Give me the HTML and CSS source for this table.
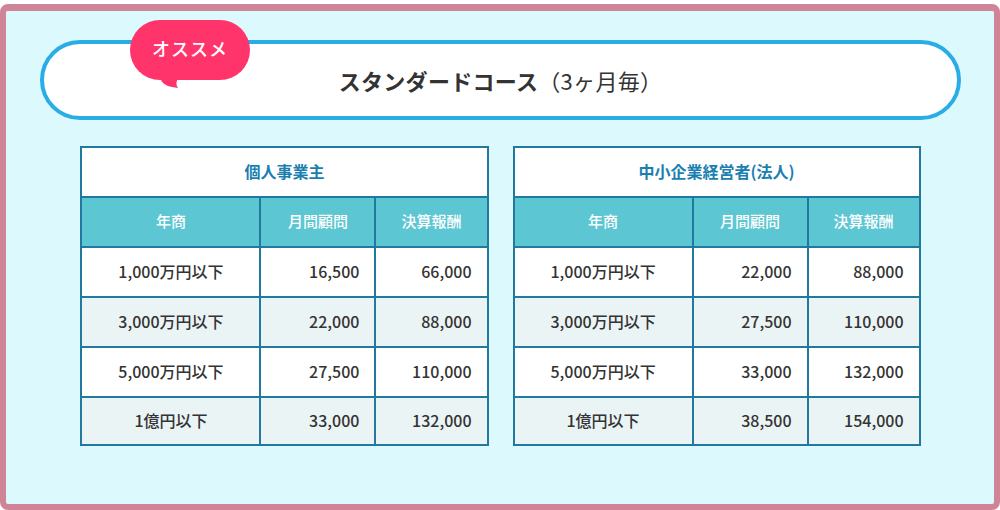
FILE: index.html
```html
<!DOCTYPE html>
<html lang="ja">
<head>
<meta charset="utf-8">
<link rel="stylesheet" href="styles.css">
</head>
<body>
<div class="frame">
  <div class="course">
    <div class="badge">
      <span>オススメ</span>
      <svg class="tail" width="20" height="12" viewBox="0 0 20 12"><path d="M0 0 Q3 8 12 9 L18 10 Q15 6 18 0 Z" fill="#ff346b"/></svg>
    </div>
    <h1 class="course-title"><b>スタンダードコース</b><span class="sub">（3ヶ月毎）</span></h1>
  </div>
  <div class="tables">
    <table class="price">
      <colgroup><col class="c1"><col class="c2"><col class="c3"></colgroup>
      <tr><th class="cap" colspan="3">個人事業主</th></tr>
      <tr class="head"><th>年商</th><th>月間顧問</th><th>決算報酬</th></tr>
      <tr><td class="lbl">1,000万円以下</td><td class="num">16,500</td><td class="num">66,000</td></tr>
      <tr class="alt"><td class="lbl">3,000万円以下</td><td class="num">22,000</td><td class="num">88,000</td></tr>
      <tr><td class="lbl">5,000万円以下</td><td class="num">27,500</td><td class="num">110,000</td></tr>
      <tr class="alt last"><td class="lbl">1億円以下</td><td class="num">33,000</td><td class="num">132,000</td></tr>
    </table>
    <table class="price">
      <colgroup><col class="c1"><col class="c2"><col class="c3"></colgroup>
      <tr><th class="cap" colspan="3">中小企業経営者(法人)</th></tr>
      <tr class="head"><th>年商</th><th>月間顧問</th><th>決算報酬</th></tr>
      <tr><td class="lbl">1,000万円以下</td><td class="num">22,000</td><td class="num">88,000</td></tr>
      <tr class="alt"><td class="lbl">3,000万円以下</td><td class="num">27,500</td><td class="num">110,000</td></tr>
      <tr><td class="lbl">5,000万円以下</td><td class="num">33,000</td><td class="num">132,000</td></tr>
      <tr class="alt last"><td class="lbl">1億円以下</td><td class="num">38,500</td><td class="num">154,000</td></tr>
    </table>
  </div>
</div>
</body>
</html>
```
FILE: styles.css
```css
html, body {
  margin: 0;
  padding: 0;
  background: #ffffff;
}
body {
  font-family: "Noto Sans CJK JP", "Noto Sans", sans-serif;
  color: #333333;
  width: 1000px;
  height: 510px;
  overflow: hidden;
}
.frame {
  margin-top: 4px;
  height: 506px;
  box-sizing: border-box;
  border: 6px solid #cf8597;
  border-top-width: 7px;
  border-radius: 8px;
  background: #dcf9fd;
  padding: 29px 33px 0 34px;
}
.course {
  position: relative;
  height: 80px;
  box-sizing: border-box;
  border: 4px solid #2aade6;
  border-radius: 40px;
  background: #ffffff;
  display: flex;
  align-items: center;
  justify-content: center;
}
.course-title {
  margin: 0;
  font-size: 22px;
  line-height: 1;
  color: #333333;
  letter-spacing: 0.3px;
}
.course-title b {
  font-weight: 700;
}
.course-title .sub {
  font-weight: 400;
}
.badge {
  position: absolute;
  left: 86px;
  top: -24px;
  width: 120px;
  height: 60px;
  border-radius: 30px;
  background: #ff346b;
  color: #ffffff;
  display: flex;
  align-items: center;
  justify-content: center;
  font-size: 18px;
  font-weight: 500;
  letter-spacing: 1px;
}
.badge span {
  margin-top: -4px;
}
.tail {
  position: absolute;
  left: 30px;
  top: 58px;
}
.tables {
  margin-top: 26px;
  display: flex;
  justify-content: center;
  gap: 24px;
}
.price {
  border-collapse: collapse;
  width: 406px;
  table-layout: fixed;
  font-size: 16px;
  font-weight: 500;
  background: #ffffff;
}
.price .c1 { width: 179px; }
.price .c2 { width: 115px; }
.price .c3 { width: 112px; }
.price th, .price td {
  border: 2px solid #22799f;
  height: 45px;
  padding: 0 0 3px 0;
  line-height: 1;
}
.price tr.last td {
  height: 43px;
}
.price th.cap {
  color: #1a7fb0;
  font-weight: 700;
  font-size: 16px;
  text-align: center;
}
.price .head th {
  background: #5dc6d3;
  color: #ffffff;
  font-weight: 500;
  font-size: 15px;
  text-align: center;
}
.price td.lbl {
  text-align: center;
}
.price td.num {
  text-align: right;
  padding-right: 15px;
}
.price tr.alt td {
  background: #ebf4f5;
}
```
